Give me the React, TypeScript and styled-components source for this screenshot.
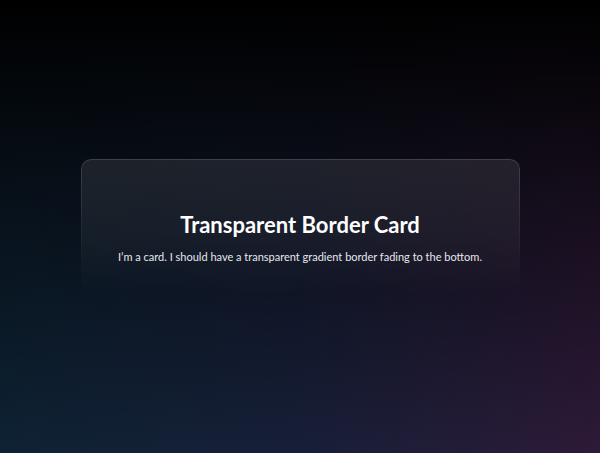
import React from "react";
import styled, { createGlobalStyle } from "styled-components";

const Global = createGlobalStyle`
  html, body { margin: 0; padding: 0; height: 100%; }
  body {
    font-family: "Lato", "Noto Sans", sans-serif;
    background: #000000;
  }
  #root { height: 100%; }
`;

const Page = styled.main`
  height: 453px;
  display: flex;
  align-items: center;
  justify-content: center;
  background:
    linear-gradient(180deg, #000000 0%, rgba(0, 0, 0, 0.5) 45%, rgba(0, 0, 0, 0) 100%),
    linear-gradient(90deg, #0e2234 0%, #171f38 50%, #2d1a38 100%);
`;

const Card = styled.section`
  position: relative;
  width: 439px;
  height: 135px;
  box-sizing: border-box;
  border-radius: 10px;
  padding: 52px 16px 0;
  display: flex;
  flex-direction: column;
  align-items: center;
  text-align: center;
  background: linear-gradient(180deg, rgba(255, 255, 255, 0.09) 0%, rgba(255, 255, 255, 0.05) 55%, rgba(255, 255, 255, 0) 100%);

  &::before {
    content: "";
    position: absolute;
    inset: 0;
    border-radius: inherit;
    padding: 1px;
    background: linear-gradient(180deg, rgba(255, 255, 255, 0.14), rgba(255, 255, 255, 0) 80%);
    -webkit-mask: linear-gradient(#000 0 0) content-box, linear-gradient(#000 0 0);
    -webkit-mask-composite: xor;
    mask-composite: exclude;
    pointer-events: none;
  }
`;

const Title = styled.h2`
  margin: 0;
  font-size: 22px;
  line-height: 28px;
  font-weight: 700;
  color: #ffffff;
`;

const Text = styled.p`
  margin: 10px 0 0;
  font-size: 11px;
  line-height: 16px;
  color: #e6e8ee;
  white-space: nowrap;
`;

export default function App() {
  return (
    <>
      <Global />
      <Page>
        <Card>
          <Title>Transparent Border Card</Title>
          <Text>I’m a card. I should have a transparent gradient border fading to the bottom.</Text>
        </Card>
      </Page>
    </>
  );
}
